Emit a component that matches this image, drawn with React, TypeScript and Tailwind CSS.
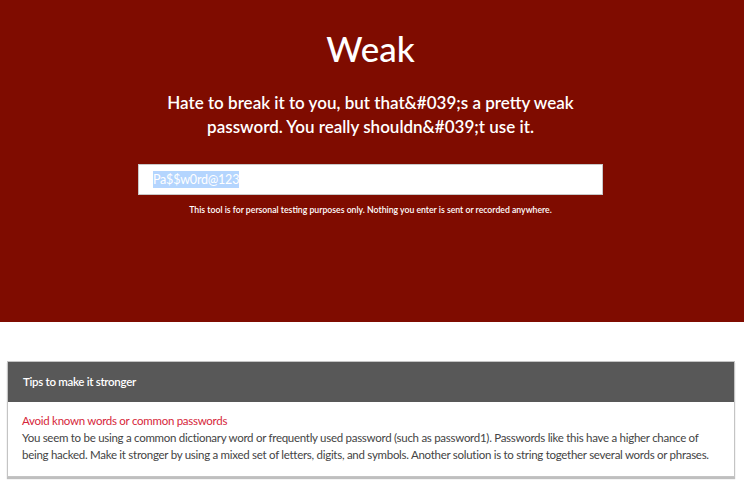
import React from 'react';

const App: React.FC = () => {
  return (
    <div className="w-[744px] h-[488px] bg-white overflow-hidden font-['Lato',sans-serif]">
      <section className="h-[322px] bg-[#7f0c00] flex flex-col items-center text-white pr-[3px]">
        <h1 className="mt-[26px] text-[35px] leading-[44px] font-medium">Weak</h1>
        <p className="mt-[21px] w-[440px] text-center text-[17px] leading-[24px] font-semibold">
          Hate to break it to you, but that&amp;#039;s a pretty weak password. You really shouldn&amp;#039;t use it.
        </p>
        <div className="mt-[25px] w-[465px] h-[31px] bg-white border border-[#c8c8c8] flex items-center px-[14px]">
          <span className="bg-[#b4d5fe] text-white text-[12.5px] leading-[17px] tracking-[-0.2px]">Pa$$w0rd@123</span>
        </div>
        <p className="mt-[9px] text-[8.7px] leading-[12px] font-semibold">
          This tool is for personal testing purposes only. Nothing you enter is sent or recorded anywhere.
        </p>
      </section>

      <div className="pt-[39px] pl-[7px] pr-[9px]">
        <div className="border border-[#c4c4c4] shadow-[0_2px_1px_rgba(0,0,0,0.25)]">
          <div className="h-[40px] bg-[#585858] flex items-center px-[15px] text-white text-[11.5px] tracking-[-0.3px] font-semibold">
            Tips to make it stronger
          </div>
          <div className="px-[14px] pt-[10px] pb-[13px] text-[11.5px] leading-[17px] tracking-[-0.28px]">
            <div className="text-[#d6263a]">Avoid known words or common passwords</div>
            <p className="text-[#444]">
              You seem to be using a common dictionary word or frequently used password (such as password1). Passwords like this have a higher chance of being hacked. Make it stronger by using a mixed set of letters, digits, and symbols. Another solution is to string together several words or phrases.
            </p>
          </div>
        </div>
      </div>
    </div>
  );
};

export default App;
